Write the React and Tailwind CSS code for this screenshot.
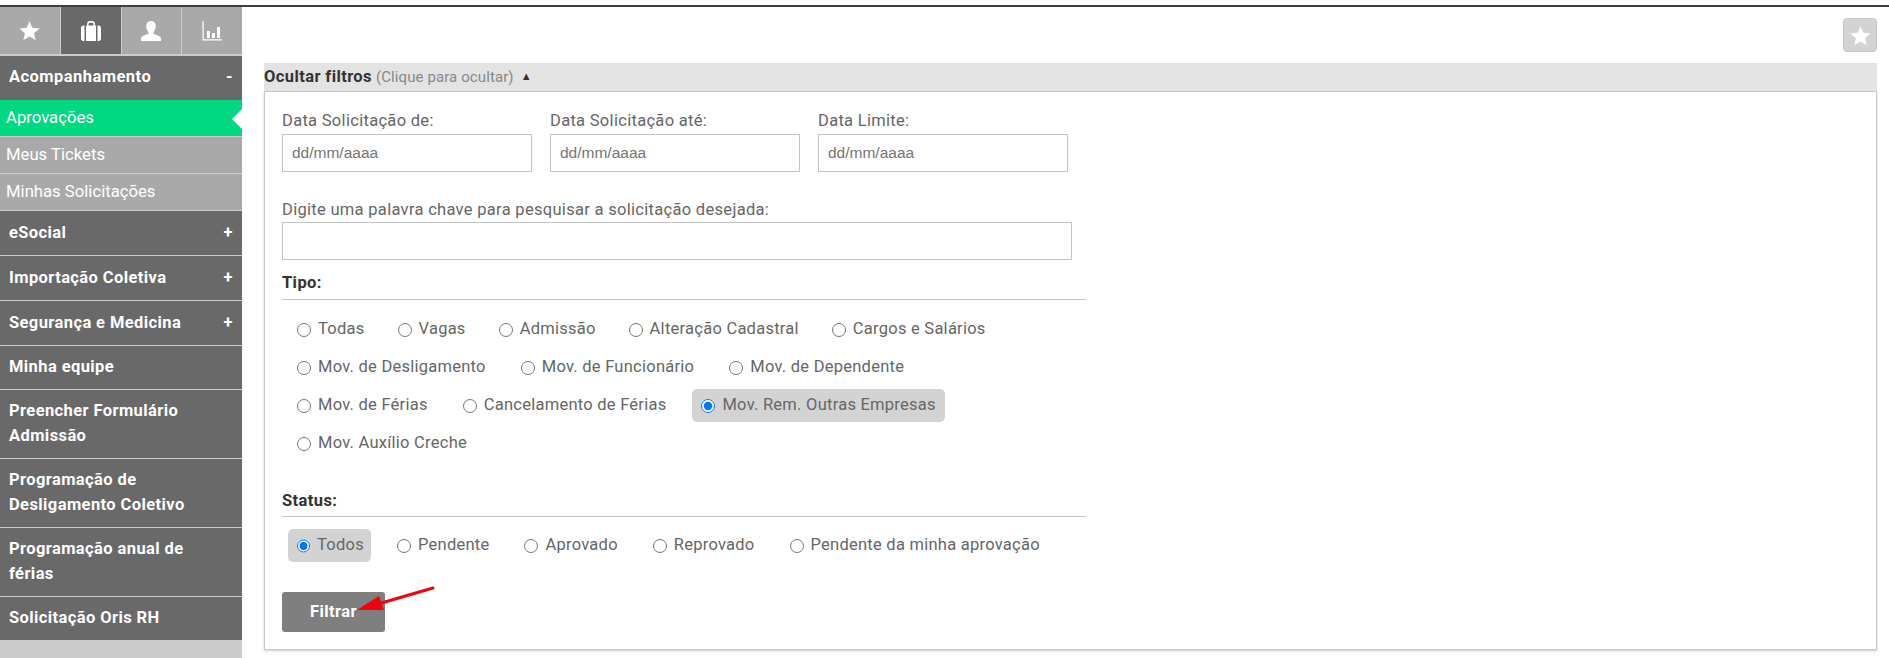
import React from "react";

const font = "font-['Roboto',sans-serif]";

const tipos = [
  { gap: "gap-[15px]", items: ["Todas", "Vagas", "Admissão", "Alteração Cadastral", "Cargos e Salários"] },
  { gap: "gap-[17px]", items: ["Mov. de Desligamento", "Mov. de Funcionário", "Mov. de Dependente"] },
  { gap: "gap-[17px]", items: ["Mov. de Férias", "Cancelamento de Férias", "Mov. Rem. Outras Empresas"] },
  { gap: "gap-[17px]", items: ["Mov. Auxílio Creche"] },
];

const statusList = ["Todos", "Pendente", "Aprovado", "Reprovado", "Pendente da minha aprovação"];

const menuItems = [
  { label: "eSocial", sign: "+", height: "h-[44px]" },
  { label: "Importação Coletiva", sign: "+", height: "h-[44px]" },
  { label: "Segurança e Medicina", sign: "+", height: "h-[44px]" },
  { label: "Minha equipe", height: "h-[43px]" },
  { label: "Preencher Formulário Admissão", height: "h-[68px]", wide: true },
  { label: "Programação de Desligamento Coletivo", height: "h-[68px]", wide: true },
  { label: "Programação anual de férias", height: "h-[68px]", wide: true },
  { label: "Solicitação Oris RH", height: "h-[43px]" },
];

const StarIcon = ({ size = 20 }) => (
  <svg width={size} height={size} viewBox="0 0 24 24" fill="#fff">
    <path d="M12 1.5l3.2 7.4 8.3.7-6.3 5.4 1.9 8-7.1-4.2L4.9 23l1.900-8L.5 9.600l8.300-.7z" />
  </svg>
);

const SuitcaseIcon = () => (
  <svg width="22" height="22" viewBox="0 0 22 22" fill="#fff">
    <path d="M7 4.5C7 2.5 8 1 10 1h2c2 0 3 1.500 3 3.500V6h-1.500V4.500c0-1-.5-1.800-1.500-1.800h-2c-1 0-1.500.8-1.500 1.800V6H7z" />
    <rect x="6" y="5.500" width="10" height="15.500" rx="0.500" />
    <path d="M1 8c0-1.500.8-2.500 2.500-2.500H4.500V21H3.500C1.800 21 1 20 1 18.500zM17.500 5.500h1C20.200 5.500 21 6.500 21 8v10.500c0 1.500-.8 2.500-2.500 2.500h-1z" />
  </svg>
);

const UserIcon = () => (
  <svg width="22" height="22" viewBox="0 0 22 22" fill="#fff">
    <path d="M11 1c3 0 4.800 2.200 4.800 5.300 0 2.500-1 4.500-2.300 5.700v1.800c2.200 1 7.500 2 7.500 5v2.200H1V18.800c0-3 5.300-4 7.500-5V12C7.200 10.800 6.200 8.800 6.200 6.300 6.200 3.200 8 1 11 1z" />
  </svg>
);

const ChartIcon = () => (
  <svg width="22" height="22" viewBox="0 0 22 22" fill="#fff">
    <path d="M1.500 1h1.200v18.300H21v1.200H1.500z" />
    <rect x="6" y="11" width="3" height="7" />
    <rect x="11" y="13" width="3" height="5" />
    <rect x="16" y="7" width="3" height="11" />
  </svg>
);

const tabs = [
  { icon: <StarIcon size={21} /> },
  { icon: <SuitcaseIcon />, active: true },
  { icon: <UserIcon /> },
  { icon: <ChartIcon /> },
];

const Radio = ({ label, checked, width = "" }) => (
  <label
    className={`flex h-[33px] items-center gap-[7px] rounded-[5px] px-[9px] ${width} ${checked ? "bg-[#d3d3d3]" : ""}`}
  >
    <input type="radio" checked={!!checked} readOnly className="m-0 h-[14px] w-[14px]" />
    <span className="text-[16.500px] tracking-[0.25px] text-[#666]">{label}</span>
  </label>
);

const Field = ({ label }) => (
  <div className="w-[250px]">
    <p className="mb-[3px] text-[16.500px] leading-[20px] tracking-[0.3px] text-[#666]">{label}</p>
    <input
      placeholder="dd/mm/aaaa"
      className="h-[38px] w-full border border-[#c4c4c4] bg-white px-[9px] font-['Liberation_Sans',sans-serif] text-[15.500px] placeholder:text-[#757575]"
    />
  </div>
);

const SectionTitle = ({ children, pad }) => (
  <div className={`w-[804px] border-b border-[#c4c4c4] text-[16.500px] leading-[20px] font-bold tracking-[0.4px] text-[#333] ${pad}`}>
    {children}
  </div>
);

const App = () => {
  return (
    <div className={`h-[658px] overflow-hidden bg-white pt-[5px] ${font}`}>
      <div className="flex h-full border-t-2 border-[#3f3f3f]">
        <aside className="flex w-[242px] shrink-0 flex-col bg-[#cccccc]">
          <div className="flex h-[49px] shrink-0 gap-px border-b-2 border-[#ccc]">
            {tabs.map((tab, i) => (
              <div
                key={i}
                className={`flex flex-1 items-center justify-center ${tab.active ? "bg-[#696969]" : "bg-[#a9a9a9]"}`}
              >
                {tab.icon}
              </div>
            ))}
          </div>

          <div className="flex h-[44px] items-center justify-between bg-[#696969] px-[9px] pb-[2px] text-[16.500px] font-bold tracking-[0.45px] text-white">
            <span>Acompanhamento</span>
            <span>-</span>
          </div>
          <div className="relative flex h-[36px] items-center bg-[#00d982] pl-[6px] text-[16.700px] text-white">
            Aprovações
            <span className="absolute top-[9px] right-0 h-0 w-0 border-y-[10px] border-r-[10px] border-y-transparent border-r-white" />
          </div>
          <div className="mt-px flex h-[36px] items-center bg-[#a9a9a9] pl-[6px] text-[16.700px] text-white">
            Meus Tickets
          </div>
          <div className="mt-px flex h-[36px] items-center bg-[#a9a9a9] pl-[6px] text-[16.700px] text-white">
            Minhas Solicitações
          </div>

          {menuItems.map((item) => (
            <div
              key={item.label}
              className={`mt-px flex items-center justify-between bg-[#696969] px-[9px] pb-[2px] text-[16.500px] leading-[25px] font-bold tracking-[0.4px] text-white ${item.height}`}
            >
              <span className={item.wide ? "w-[200px]" : ""}>{item.label}</span>
              {item.sign && <span>{item.sign}</span>}
            </div>
          ))}
        </aside>

        <main className="min-w-0 flex-1 pr-[12px] pl-[22px]">
          <div className="flex justify-end pt-[11px]">
            <div className="flex h-[34px] w-[34px] items-center justify-center rounded-[4px] border border-[#c8c8c8] bg-[#d3d3d3]">
              <StarIcon size={21} />
            </div>
          </div>

          <div className="mt-[11px] flex h-[28px] items-center gap-[4px] bg-[#e3e3e3] text-[15px] tracking-[0.1px] whitespace-nowrap">
            <span className="text-[16.500px] font-bold tracking-[0.4px] text-[#333]">Ocultar filtros</span>
            <span className="text-[#888]">(Clique para ocultar)</span>
            <span className="ml-[3px] text-[11px] text-[#333]">▲</span>
          </div>

          <section className="h-[559px] border border-[#c8c8c8] px-[17px] pt-[19px] shadow-[0_1px_2px_rgba(0,0,0,0.2)]">
            <div className="flex gap-[18px]">
              <Field label="Data Solicitação de:" />
              <Field label="Data Solicitação até:" />
              <Field label="Data Limite:" />
            </div>

            <p className="mt-[28px] mb-[2px] text-[16.500px] leading-[20px] tracking-[0.3px] text-[#666]">
              Digite uma palavra chave para pesquisar a solicitação desejada:
            </p>
            <input className="block h-[38px] w-[790px] border border-[#c4c4c4] bg-white" />

            <div className="mt-[13px]">
              <SectionTitle pad="pb-[6px]">Tipo:</SectionTitle>
            </div>
            <div className="mt-[13px] flex flex-col gap-[5px] pl-[6px]">
              {tipos.map((row, i) => (
                <div key={i} className={`flex ${row.gap}`}>
                  {row.items.map((t) => (
                    <Radio key={t} label={t} checked={t === "Mov. Rem. Outras Empresas"} />
                  ))}
                </div>
              ))}
            </div>

            <div className="mt-[31px]">
              <SectionTitle pad="pb-[5px]">Status:</SectionTitle>
            </div>
            <div className="mt-[12px] flex gap-[17px] pl-[6px]">
              {statusList.map((s) => (
                <Radio key={s} label={s} checked={s === "Todos"} width={s === "Todos" ? "w-[83px]" : ""} />
              ))}
            </div>

            <div className="relative mt-[30px] w-[103px]">
              <button className="h-[40px] w-[103px] rounded-[3px] bg-[#7f7f7f] text-[16.500px] font-bold tracking-[0.4px] text-white">
                Filtrar
              </button>
              <svg className="absolute top-[-6px] left-[70px]" width="84" height="32" viewBox="0 0 84 32">
                <path d="M81 2 L26 18" stroke="#f5000b" strokeWidth="3" strokeLinecap="round" />
                <path d="M5 24 L27 10 L32 24 Z" fill="#f5000b" />
              </svg>
            </div>
          </section>
        </main>
      </div>
    </div>
  );
};

export default App;
